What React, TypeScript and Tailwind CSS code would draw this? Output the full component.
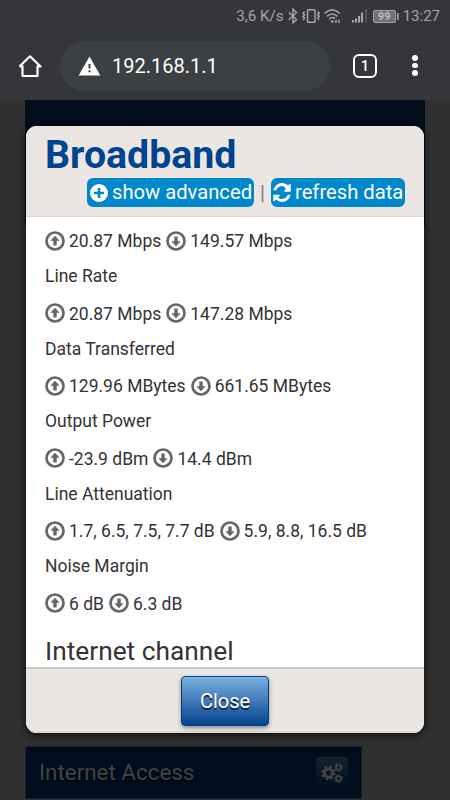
import React from "react";

const ArrowCircle = ({ down = false }: { down?: boolean }) => (
  <svg viewBox="0 0 20 20" className={`h-5 w-5 shrink-0 ${down ? "rotate-180" : ""}`}>
    <circle cx="10" cy="10" r="8.5" fill="none" stroke="#666" strokeWidth="2.7" />
    <path d="M10 4.8 14.6 9.8H11.7V14.6H8.3V9.8H5.4Z" fill="#666" />
  </svg>
);

const Gears = () => (
  <svg viewBox="0 0 22 20" className="h-5 w-[22px] shrink-0" fill="none" stroke="currentColor">
    <circle cx="7.5" cy="10" r="4.100" strokeWidth="2.800" />
    <circle cx="7.5" cy="10" r="6.200" strokeWidth="2" strokeDasharray="2.500 2.370" />
    <circle cx="17.500" cy="4.500" r="2.300" strokeWidth="1.600" />
    <circle cx="17.500" cy="4.500" r="3.600" strokeWidth="1.400" strokeDasharray="1.500 1.327" />
    <circle cx="17.500" cy="15.500" r="2.300" strokeWidth="1.600" />
    <circle cx="17.500" cy="15.500" r="3.600" strokeWidth="1.400" strokeDasharray="1.500 1.327" />
  </svg>
);

const StatusBar = () => (
  <div className="flex h-8 items-center justify-end pr-[10px] text-[#a3a4a7]">
    <span className="text-[15.2px] leading-8">3,6 K/s</span>
    <svg viewBox="0 0 10 16" className="ml-[4px] h-[16px] w-[10px] shrink-0" fill="none" stroke="currentColor" strokeWidth="1.4">
      <path d="M.8 4.2 8.6 11.4 5 15V1L8.6 4.6.8 11.8" />
    </svg>
    <svg viewBox="0 0 18 14" className="ml-[4px] h-[14px] w-[18px] shrink-0" fill="none" stroke="currentColor">
      <rect x="5.500" y=".8" width="7.500" height="12.4" rx=".8" strokeWidth="1.5" />
      <path d="M2.5 2.500 1 4.5 2.5 6 1 7.500 2.500 9 1 11M15.700 2.500 17.200 4.500 15.700 6 17.200 7.500 15.700 9 17.200 11" strokeWidth="1.500" />
    </svg>
    <svg viewBox="0 0 18 15" className="ml-[4px] h-[15px] w-[18px] shrink-0" fill="none" stroke="currentColor" strokeWidth="1.6">
      <path d="M.6 4.300Q8-2.400 15.800 4.300M2.900 7.300Q8.200 2.700 13.500 7.300M5.200 10Q8.200 7.300 11.200 9.400" />
      <path d="M6.200 11.700 8.300 14.200 10 12.200Q8.300 10.400 6.200 11.700Z" fill="currentColor" stroke="none" />
      <path d="M12 10.800v3.200M15 10.800v3.200" strokeWidth="1.500" />
    </svg>
    <svg viewBox="0 0 15 14" className="ml-[10px] h-[14px] w-[15px] shrink-0">
      <path d="M0 11h2v2.500H0zM3 9.500h2v4H3zM6 7h2v6.500H6zM9 3.500h2v10H9z" fill="currentColor" />
      <path d="M13 0h2v13.500h-2z" fill="#55565a" />
    </svg>
    <div className="ml-[6px] flex h-[13px] w-[23px] shrink-0 items-center justify-center rounded-[2px] border border-[#a3a4a7] bg-[#707174] text-[11px] font-bold leading-none text-[#bbbcbe]">99</div>
    <div className="ml-px h-[7px] w-[2px] bg-[#8c8d90]" />
    <span className="ml-[4px] text-[15px] leading-8">13:27</span>
  </div>
);

const Toolbar = () => (
  <div className="flex h-[68px] items-center pb-px">
    <svg viewBox="0 0 24 24" className="ml-[18px] h-6 w-6 shrink-0" fill="none" stroke="#fff" strokeWidth="2.200" strokeLinejoin="round">
      <path d="M4.500 11.500V22H19.500V11.500M1.500 12.500 12 2.300 22.500 12.500H19.500M1.500 12.500H4.500" />
    </svg>
    <div className="ml-[18px] flex h-[50px] w-[270px] shrink-0 items-center rounded-full bg-[#3c4043] text-white">
      <svg viewBox="0 0 22 20" className="ml-[18px] h-5 w-[23px] shrink-0">
        <path d="M11 .500 21.800 19.500H.2Z" fill="#fff" />
        <path d="M10 8h2v4.500h-2zM10 14.200h2v2h-2z" fill="#3c4043" />
      </svg>
      <span className="ml-[11px] text-[20px]">192.168.1.1</span>
    </div>
    <div className="ml-[23px] flex h-[24px] w-[24px] shrink-0 items-center justify-center rounded-[6px] border-2 border-white text-[14px] font-medium leading-none text-white">1</div>
    <div className="ml-[35px] flex flex-col gap-[2px]">
      <i className="h-[5.500px] w-[5.500px] rounded-full bg-white" />
      <i className="h-[5.500px] w-[5.500px] rounded-full bg-white" />
      <i className="h-[5.500px] w-[5.500px] rounded-full bg-white" />
    </div>
  </div>
);

const stats = [
  { up: "20.87 Mbps", down: "149.57 Mbps", next: "Line Rate" },
  { up: "20.87 Mbps", down: "147.28 Mbps", next: "Data Transferred" },
  { up: "129.96 MBytes", down: "661.65 MBytes", next: "Output Power" },
  { up: "-23.9 dBm", down: "14.4 dBm", next: "Line Attenuation" },
  { up: "1.7, 6.5, 7.5, 7.7 dB", down: "5.9, 8.8, 16.5 dB", next: "Noise Margin" },
  { up: "6 dB", down: "6.3 dB", next: "" },
];

const Dialog = () => (
  <section className="absolute left-[26px] top-[126px] flex h-[607px] w-[398px] flex-col overflow-hidden rounded-[11px] bg-white shadow-[0_2px_9px_rgba(0,0,0,0.8)]">
    <header className="h-[91px] shrink-0 border-b border-[#d8d8d8] bg-[#ebe6e2] px-[19px]">
      <h1 className="pt-[7px] text-[39.3px] font-bold leading-[45px] text-[#00438f]">Broadband</h1>
      <div className="flex items-center justify-end">
        <button className="flex h-[29px] w-[167px] items-center rounded-[6px] bg-[#0088cc] pl-[3px] text-[20.2px] leading-[29px] text-white">
          <svg viewBox="0 0 18 18" className="mr-[4px] h-[18px] w-[18px] shrink-0">
            <circle cx="9" cy="9" r="9" fill="#fff" />
            <path d="M9 4v10M4 9h10" stroke="#0088cc" strokeWidth="2.600" />
          </svg>
          <span className="whitespace-nowrap">show advanced</span>
        </button>
        <span className="w-[17px] text-center text-[20px] leading-none text-[#777]">|</span>
        <button className="flex h-[29px] w-[134px] items-center rounded-[6px] bg-[#0088cc] pl-[2px] text-[20.2px] leading-[29px] text-white">
          <svg viewBox="0 0 1536 1664" className="mr-[4px] h-[19px] w-[18px] shrink-0" fill="#fff">
            <path d="M1511 1056q0 5-1 7-64 268-268 434.500T764 1664q-146 0-282.500-55T238 1452l-129 129q-19 19-45 19t-45-19-19-45v-448q0-26 19-45t45-19h448q26 0 45 19t19 45-19 45l-137 137q71 66 161 102t187 36q134 0 250-65t186-179q11-17 53-117 8-23 30-23h192q13 0 22.500 9.500t9.500 22.500zm25-800v448q0 26-19 45t-45 19h-448q-26 0-45-19t-19-45 19-45l138-138Q969 256 768 256q-134 0-250 65T332 500q-11 17-53 117-8 23-30 23H50q-13 0-22.500-9.500T18 608v-7q65-268 270-434.500T768 0q146 0 284 55.500T1297 212l130-129q19-19 45-19t45 19 19 45z" />
          </svg>
          <span className="whitespace-nowrap">refresh data</span>
        </button>
      </div>
    </header>
    <div className="min-h-0 flex-1 overflow-hidden px-[19px] pt-[5px] text-[17.5px] text-[#333]">
      {stats.map((s, i) => (
        <div key={i} className="h-[72.500px]">
          <div className="flex h-[37px] items-center whitespace-nowrap">
            <ArrowCircle />
            <span className="ml-[4px] mr-[5px] pt-[1.5px]">{s.up}</span>
            <ArrowCircle down />
            <span className="ml-[4px] pt-[1.5px]">{s.down}</span>
          </div>
          {s.next && <div className="h-[35.500px] leading-[35px]">{s.next}</div>}
        </div>
      ))}
      <h2 className="-mt-[35.500px] text-[26.3px] leading-[59px]">Internet channel</h2>
    </div>
    <footer className="flex h-[66px] shrink-0 justify-center border-t-2 border-[#c8c9c9] bg-[#ebe6e2] pt-[7px] shadow-[inset_0_-2px_0_#ddd8d4]">
      <button className="h-[50px] w-[88px] rounded-[4px] border border-[#003d84] bg-linear-to-b from-[#79b0df] to-[#00438f] text-[20px] text-white shadow-[0_2px_4px_rgba(0,0,0,0.4),inset_0_1px_0_rgba(255,255,255,0.15)] [text-shadow:0_2px_1px_rgba(0,0,0,0.75)]">Close</button>
    </footer>
  </section>
);

export default function App() {
  return (
    <main className="relative h-[800px] w-[450px] overflow-hidden bg-[#303030] font-[Roboto,sans-serif]">
      <div className="bg-[#35363a]">
        <StatusBar />
        <Toolbar />
      </div>
      <div className="ml-[25px] h-[126px] w-[400px] bg-[#000d1c]" />
      <div className="ml-[25px] mt-[520px] flex h-[53px] w-[337px] items-center justify-between border border-[#17202a] bg-[#000d1c] px-[13px] text-[#444]">
        <span className="text-[22.4px] [text-shadow:0_1px_1px_#000]">Internet Access</span>
        <div className="flex h-[32px] w-[32px] items-center justify-center rounded-[4px] bg-linear-to-b from-[#17222d] to-[#000d1c]">
          <Gears />
        </div>
      </div>
      <Dialog />
    </main>
  );
}
